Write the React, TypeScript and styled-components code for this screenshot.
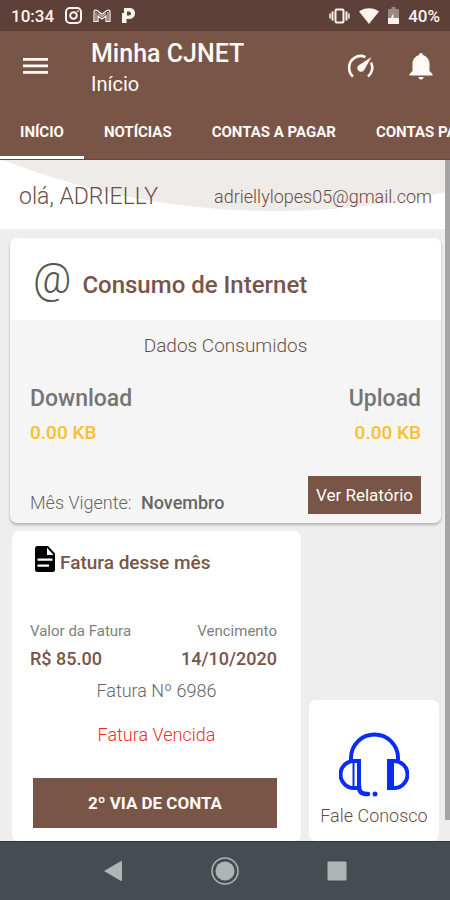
import React from "react";
import styled, { createGlobalStyle } from "styled-components";

const brown = "#795548";
const darkBrown = "#5d4037";
const textBrown = "#6d4c41";

const GlobalStyle = createGlobalStyle`
  * { box-sizing: border-box; }
  body {
    margin: 0;
    background: #eeeeee;
    font-family: Roboto, "Liberation Sans", sans-serif;
    color: #666666;
  }
  h1, h2, p, dl, dd { margin: 0; }
  button { font-family: inherit; border: 0; padding: 0; cursor: pointer; }
`;

const Screen = styled.div`
  display: flex;
  flex-direction: column;
  min-height: 100vh;
`;

const StatusBar = styled.div`
  display: flex;
  align-items: center;
  justify-content: space-between;
  height: 31px;
  padding: 0 10px 0 11px;
  background: ${darkBrown};
  color: #fff3ee;
  font-size: 17px;
  font-weight: 500;
`;

const StatusGroup = styled.div<{ $gap: number }>`
  display: flex;
  align-items: center;
  gap: ${(p) => p.$gap}px;
`;

const Header = styled.header`
  background: ${brown};
  color: #fffaf6;
`;

const Toolbar = styled.div`
  display: flex;
  align-items: center;
  height: 71px;
  padding: 0 17px 0 23px;
`;

const IconButton = styled.button`
  display: flex;
  background: none;
  color: inherit;
`;

const Titles = styled.div`
  flex: 1;
  padding: 2px 0 0 43px;
`;

const AppTitle = styled.h1`
  font-size: 25px;
  line-height: 32px;
  font-weight: 500;
`;

const Subtitle = styled.p`
  font-size: 20px;
  line-height: 28px;
`;

const Actions = styled.div`
  display: flex;
  align-items: center;
  gap: 35px;
`;

const Tabs = styled.nav`
  display: flex;
  overflow: hidden;
  border-bottom: 1px solid #6a463c;
`;

const Tab = styled.button<{ $active?: boolean }>`
  flex: none;
  height: 57px;
  padding: 5px 20px 0;
  background: none;
  color: inherit;
  font-size: 15px;
  font-weight: 700;
  border-bottom: 3px solid ${(p) => (p.$active ? "#ffffff" : "transparent")};
`;

const Content = styled.main`
  position: relative;
  flex: 1;
  display: flex;
  flex-direction: column;
`;

const ScrollThumb = styled.div`
  position: absolute;
  top: 0;
  right: 0;
  bottom: 21px;
  width: 5px;
  background: #a5a5a5;
`;

const Greeting = styled.section`
  position: relative;
  display: flex;
  align-items: center;
  justify-content: space-between;
  height: 69px;
  padding: 3px 18px 0 19px;
  background: #ffffff;
  color: ${textBrown};
  font-weight: 300;
`;

const Wave = styled.svg`
  position: absolute;
  inset: 0;
  width: 100%;
  height: 100%;
`;

const UserName = styled.span`
  position: relative;
  font-size: 23px;
`;

const Email = styled.span`
  position: relative;
  font-size: 18px;
`;

const Card = styled.section`
  border-radius: 7px;
  background: #ffffff;
  overflow: hidden;
`;

const UsageCard = styled(Card)`
  margin: 9px 9px 0 10px;
  background: #f5f5f5;
  box-shadow: 0 2px 3px rgba(0, 0, 0, 0.25);
`;

const UsageHeader = styled.div`
  display: flex;
  align-items: center;
  gap: 11px;
  height: 82px;
  padding: 0 23px;
  background: #ffffff;
`;

const AtSign = styled.span`
  font-size: 42px;
  line-height: 52px;
  font-weight: 300;
  color: #555555;
`;

const UsageTitle = styled.h2`
  padding-top: 12px;
  font-size: 24px;
  line-height: 28px;
  font-weight: 500;
  color: ${brown};
`;

const UsageBody = styled.div`
  padding: 12px 20px 9px;
`;

const Caption = styled.p`
  text-align: center;
  font-size: 19px;
  line-height: 28px;
  font-weight: 300;
  color: ${textBrown};
`;

const Row = styled.dl<{ $top: number }>`
  display: flex;
  justify-content: space-between;
  margin-top: ${(p) => p.$top}px;
`;

const Stat = styled.div<{ $end?: boolean }>`
  text-align: ${(p) => (p.$end ? "right" : "left")};
`;

const StatName = styled.dt`
  font-size: 23px;
  line-height: 34px;
  font-weight: 500;
  color: #757575;
`;

const StatValue = styled.dd`
  font-size: 19px;
  line-height: 34px;
  font-weight: 500;
  color: #fbc02d;
`;

const UsageFooter = styled.div`
  display: flex;
  align-items: flex-end;
  justify-content: space-between;
  margin-top: 26px;
`;

const Period = styled.p`
  padding-bottom: 1px;
  font-size: 18px;
  line-height: 20px;
  font-weight: 300;

  b {
    margin-left: 5px;
    font-weight: 500;
  }
`;

const SolidButton = styled.button<{ $height: number; $strong?: boolean }>`
  height: ${(p) => p.$height}px;
  padding: 0 8px;
  background: ${brown};
  color: #fffaf6;
  font-size: 17px;
  font-weight: ${(p) => (p.$strong ? 700 : 400)};
`;

const BottomRow = styled.div`
  display: grid;
  grid-template-columns: 20fr 9fr;
  align-items: end;
  gap: 8px;
  padding: 8px 11px 0 12px;
  flex: 1;
`;

const InvoiceCard = styled(Card)`
  display: flex;
  flex-direction: column;
  align-self: stretch;
  padding: 14px 24px 13px 18px;
`;

const InvoiceHeader = styled.div`
  display: flex;
  align-items: center;
  gap: 5px;
  padding-left: 5px;
`;

const InvoiceTitle = styled.h2`
  padding-top: 8px;
  font-size: 19px;
  line-height: 20px;
  font-weight: 500;
  color: ${brown};
`;

const InvoiceLabel = styled.dt`
  font-size: 15px;
  line-height: 24px;
  color: #808080;
`;

const InvoiceValue = styled.dd`
  font-size: 18px;
  line-height: 32px;
  font-weight: 500;
  color: ${brown};
`;

const InvoiceLine = styled.p<{ $alert?: boolean }>`
  margin-top: ${(p) => (p.$alert ? 12 : 0)}px;
  padding-left: 6px;
  text-align: center;
  font-size: 18px;
  line-height: 32px;
  font-weight: 300;
  color: ${(p) => (p.$alert ? "#f32c1e" : "inherit")};
`;

const InvoiceAction = styled.div`
  display: flex;
  flex-direction: column;
  margin-top: auto;
  padding-left: 3px;
`;

const ContactCard = styled.button`
  display: flex;
  flex-direction: column;
  align-items: center;
  justify-content: flex-end;
  gap: 6px;
  height: 141px;
  padding-bottom: 13px;
  border-radius: 7px;
  background: #ffffff;
  color: ${textBrown};
  font-size: 18px;
  line-height: 24px;
  font-weight: 300;
  white-space: nowrap;
`;

const SystemNav = styled.nav`
  display: grid;
  grid-template-columns: repeat(3, 1fr);
  align-items: center;
  height: 59px;
  padding: 0 57px;
  background: #454d51;
  border-top: 1px solid #30383b;
`;

const NavButton = styled.button`
  display: flex;
  justify-content: center;
  background: none;
  color: #aeb5b7;
`;

const InstagramIcon = () => (
  <svg width="17" height="17" viewBox="0 0 17 17" fill="none" stroke="currentColor" strokeWidth="2">
    <rect x="1" y="1" width="15" height="15" rx="4" />
    <circle cx="8.5" cy="8.5" r="3.3" />
    <circle cx="12.7" cy="4.3" r="0.6" strokeWidth="1" />
  </svg>
);

const MailIcon = () => (
  <svg width="18" height="14" viewBox="0 0 18 14" fill="none" stroke="currentColor" strokeWidth="1.2">
    <path d="M1 12.5V3C1 1 3 .6 4.5 1.8L9 5.3l4.500-3.500C15 .6 17 1 17 3v9.500h-4V7L9 10 5 7v5.500Z" />
    <path d="M3 12V3M15 12V3M5 4.500l4 3 4-3" opacity=".7" />
  </svg>
);

const PicpayIcon = () => (
  <svg width="13" height="17" viewBox="0 0 13 17" fill="currentColor">
    <path fillRule="evenodd" d="M2 1h5.500C11 1 13 3.200 13 6.300S10.700 12 7.500 12H4.500v4H0V6h2Zm3 3.500v4h1.800c1.300 0 2.200-.7 2.200-2s-.9-2-2.200-2Z" />
  </svg>
);

const VibrateIcon = () => (
  <svg width="21" height="16" viewBox="0 0 21 16" fill="none" stroke="currentColor" strokeWidth="2">
    <rect x="6.500" y="1.500" width="8" height="13" rx="1" />
    <path d="M3.500 3.500v9M17.500 3.500v9" />
    <path d="M1 5.500v5M20 5.500v5" strokeWidth="1.500" />
  </svg>
);

const WifiIcon = () => (
  <svg width="20" height="16" viewBox="0 0 20 16" fill="currentColor">
    <path d="M0 3.500C5.500-1 14.500-1 20 3.500L10 16Z" />
  </svg>
);

const BatteryIcon = () => (
  <svg width="11" height="17" viewBox="0 0 11 17" fill="currentColor">
    <path d="M3.500 0h4v2H11v15H0V2h3.500Z" opacity=".4" />
    <path d="M0 11h3l2.500-5v5H11v6H0Z" />
  </svg>
);

const MenuIcon = () => (
  <svg width="25" height="18" viewBox="0 0 25 18" fill="currentColor">
    <path d="M0 0h25v2.800H0zM0 6.500h25v2.800H0zM0 13h25v2.800H0z" />
  </svg>
);

const GaugeIcon = () => (
  <svg width="27" height="27" viewBox="0 0 27 27">
    <path d="M6 23.500A11.300 11.300 0 0 1 2.200 14.500 11.300 11.300 0 0 1 18.500 4.200M24 9.500a11.300 11.300 0 0 1-3 14" fill="none" stroke="currentColor" strokeWidth="2.600" />
    <path d="M24.500 4 17.200 17a3.700 3.700 0 1 1-5.700-4.600Z" fill="currentColor" />
  </svg>
);

const BellIcon = () => (
  <svg width="24" height="27" viewBox="0 0 24 27" fill="currentColor">
    <path d="M12 0c1.400 0 2.200 1 2.200 2.300C18.200 3.400 20.500 6.800 20.500 11v7l3 3v1.500H.5V21l3-3v-7c0-4.200 2.300-7.600 6.300-8.700C9.800 1 10.600 0 12 0ZM9.500 24h5a2.500 2.500 0 0 1-5 0Z" />
  </svg>
);

const DocumentIcon = () => (
  <svg width="20" height="26" viewBox="0 0 20 26">
    <path d="M2.500 0H13l7 7.500V23.500a2.500 2.500 0 0 1-2.500 2.500h-15A2.500 2.500 0 0 1 0 23.500v-21A2.500 2.500 0 0 1 2.500 0Z" fill="#000" />
    <path d="M12 1.800V9h6.500ZM2.500 12.500h15v2.300h-15zM2.500 18.500H14v2.300H2.500z" fill="#fff" />
  </svg>
);

const HeadsetIcon = () => (
  <svg width="70" height="66" viewBox="0 0 70 66" fill="none" stroke="#0a2cf5" strokeWidth="4">
    <path d="M12 28v-2a23.500 23.500 0 0 1 47 0v2" />
    <path d="M20 29h-5a13.500 13.500 0 0 0 0 27h5ZM50 29h5a13.500 13.500 0 0 1 0 27h-5Z" />
    <path d="M14.500 29v27" strokeWidth="2" />
    <path d="M51.500 27v31" strokeWidth="7" />
    <path d="M20 54c0 6 2 8 9 8" strokeWidth="4.500" strokeLinecap="round" />
    <circle cx="36" cy="62" r="2.500" fill="#0a2cf5" stroke="none" />
  </svg>
);

export default function App() {
  return (
    <>
      <GlobalStyle />
      <Screen>
        <StatusBar>
          <StatusGroup $gap={11}>
            <span>10:34</span>
            <InstagramIcon />
            <MailIcon />
            <PicpayIcon />
          </StatusGroup>
          <StatusGroup $gap={9}>
            <VibrateIcon />
            <WifiIcon />
            <BatteryIcon />
            <span>40%</span>
          </StatusGroup>
        </StatusBar>

        <Header>
          <Toolbar>
            <IconButton aria-label="Menu"><MenuIcon /></IconButton>
            <Titles>
              <AppTitle>Minha CJNET</AppTitle>
              <Subtitle>Início</Subtitle>
            </Titles>
            <Actions>
              <IconButton aria-label="Velocidade"><GaugeIcon /></IconButton>
              <IconButton aria-label="Notificações"><BellIcon /></IconButton>
            </Actions>
          </Toolbar>
          <Tabs>
            <Tab $active>INÍCIO</Tab>
            <Tab>NOTÍCIAS</Tab>
            <Tab>CONTAS A PAGAR</Tab>
            <Tab>CONTAS PAGAS</Tab>
          </Tabs>
        </Header>

        <Content>
          <Greeting>
            <Wave viewBox="0 0 450 69" preserveAspectRatio="none" aria-hidden="true">
              <path d="M0 0H450V31C400 43 340 51 275 51C190 51 100 37 8 2Z" fill="#efebe9" />
            </Wave>
            <UserName>olá, ADRIELLY</UserName>
            <Email>adriellylopes05@gmail.com</Email>
          </Greeting>

          <UsageCard>
            <UsageHeader>
              <AtSign aria-hidden="true">@</AtSign>
              <UsageTitle>Consumo de Internet</UsageTitle>
            </UsageHeader>
            <UsageBody>
              <Caption>Dados Consumidos</Caption>
              <Row $top={22}>
                <Stat>
                  <StatName>Download</StatName>
                  <StatValue>0.00 KB</StatValue>
                </Stat>
                <Stat $end>
                  <StatName>Upload</StatName>
                  <StatValue>0.00 KB</StatValue>
                </Stat>
              </Row>
              <UsageFooter>
                <Period>Mês Vigente: <b>Novembro</b></Period>
                <SolidButton $height={38}>Ver Relatório</SolidButton>
              </UsageFooter>
            </UsageBody>
          </UsageCard>

          <BottomRow>
            <InvoiceCard>
              <InvoiceHeader>
                <DocumentIcon />
                <InvoiceTitle>Fatura desse mês</InvoiceTitle>
              </InvoiceHeader>
              <Row $top={46}>
                <Stat>
                  <InvoiceLabel>Valor da Fatura</InvoiceLabel>
                  <InvoiceValue>R$ 85.00</InvoiceValue>
                </Stat>
                <Stat $end>
                  <InvoiceLabel>Vencimento</InvoiceLabel>
                  <InvoiceValue>14/10/2020</InvoiceValue>
                </Stat>
              </Row>
              <InvoiceLine>Fatura Nº 6986</InvoiceLine>
              <InvoiceLine $alert>Fatura Vencida</InvoiceLine>
              <InvoiceAction>
                <SolidButton $height={50} $strong>2º VIA DE CONTA</SolidButton>
              </InvoiceAction>
            </InvoiceCard>
            <ContactCard>
              <HeadsetIcon />
              <span>Fale Conosco</span>
            </ContactCard>
          </BottomRow>
          <ScrollThumb />
        </Content>

        <SystemNav aria-label="Sistema">
          <NavButton aria-label="Voltar">
            <svg width="20" height="22" viewBox="0 0 20 22" fill="currentColor"><path d="M1 11 18 1q1 0 1 1v18q0 1-1 1Z" /></svg>
          </NavButton>
          <NavButton aria-label="Tela inicial">
            <svg width="30" height="30" viewBox="0 0 30 30" fill="currentColor">
              <circle cx="15" cy="15" r="9.500" />
              <circle cx="15" cy="15" r="13" fill="none" stroke="currentColor" strokeWidth="1.500" />
            </svg>
          </NavButton>
          <NavButton aria-label="Recentes">
            <svg width="20" height="20" viewBox="0 0 20 20" fill="currentColor"><rect x="0.500" y="0.500" width="19" height="19" rx="1" /></svg>
          </NavButton>
        </SystemNav>
      </Screen>
    </>
  );
}
